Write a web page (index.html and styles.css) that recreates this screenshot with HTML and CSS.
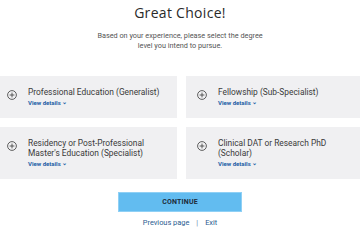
FILE: index.html
```html
<!DOCTYPE html>
<html>
<head>
<meta charset="utf-8">
<link rel="stylesheet" href="styles.css">
</head>
<body>
<main class="page">
  <h1 class="title">Great Choice!</h1>
  <p class="lead">Based on your experience, please select the degree<br>level you intend to pursue.</p>
  <div class="grid">
    <div class="card">
      <span class="plus"><svg viewBox="0 0 10 10" width="10" height="10"><circle cx="5" cy="5" r="4.4" fill="none" stroke="#3a3a3a" stroke-width="0.8"/><path d="M5 2.6V7.4M2.6 5H7.4" stroke="#3a3a3a" stroke-width="0.8"/></svg></span>
      <div class="body">
        <div class="name">Professional Education (Generalist)</div>
        <a class="details">View details <span class="chev">⌄</span></a>
      </div>
    </div>
    <div class="card">
      <span class="plus"><svg viewBox="0 0 10 10" width="10" height="10"><circle cx="5" cy="5" r="4.4" fill="none" stroke="#3a3a3a" stroke-width="0.8"/><path d="M5 2.6V7.4M2.6 5H7.4" stroke="#3a3a3a" stroke-width="0.8"/></svg></span>
      <div class="body">
        <div class="name">Fellowship (Sub-Specialist)</div>
        <a class="details">View details <span class="chev">⌄</span></a>
      </div>
    </div>
    <div class="card">
      <span class="plus"><svg viewBox="0 0 10 10" width="10" height="10"><circle cx="5" cy="5" r="4.4" fill="none" stroke="#3a3a3a" stroke-width="0.8"/><path d="M5 2.6V7.4M2.6 5H7.4" stroke="#3a3a3a" stroke-width="0.8"/></svg></span>
      <div class="body">
        <div class="name">Residency or Post-Professional<br>Master's Education (Specialist)</div>
        <a class="details">View details <span class="chev">⌄</span></a>
      </div>
    </div>
    <div class="card">
      <span class="plus"><svg viewBox="0 0 10 10" width="10" height="10"><circle cx="5" cy="5" r="4.4" fill="none" stroke="#3a3a3a" stroke-width="0.8"/><path d="M5 2.6V7.4M2.6 5H7.4" stroke="#3a3a3a" stroke-width="0.8"/></svg></span>
      <div class="body">
        <div class="name">Clinical DAT or Research PhD<br>(Scholar)</div>
        <a class="details">View details <span class="chev">⌄</span></a>
      </div>
    </div>
  </div>
  <button class="cta">CONTINUE</button>
  <nav class="links">
    <a>Previous page</a><span class="sep">|</span><a>Exit</a>
  </nav>
</main>
</body>
</html>
```

FILE: styles.css
```css
html, body {
  margin: 0;
  padding: 0;
  background: #fff;
  overflow: hidden;
}
body {
  width: 360px;
  height: 241px;
  font-family: Roboto, "Liberation Sans", sans-serif;
}
.page {
  display: flex;
  flex-direction: column;
  align-items: center;
}
.title {
  margin: 3px 0 0;
  font-family: "Open Sans", sans-serif;
  font-weight: 400;
  font-size: 14px;
  line-height: 20px;
  color: #2a2a2a;
  letter-spacing: 0.3px;
}
.lead {
  margin: 8px 0 0;
  font-size: 7.3px;
  line-height: 10px;
  color: #555;
  text-align: center;
}
.grid {
  margin-top: 25px;
  align-self: flex-start;
  margin-left: -4px;
  width: 371px;
  display: grid;
  grid-template-columns: 181px 181px;
  column-gap: 9px;
  row-gap: 9px;
}
.card {
  background: #f0f0f2;
  display: flex;
  align-items: flex-start;
  padding: 11px 10px 11px 11px;
}
.plus {
  flex: none;
  width: 10px;
  height: 10px;
  margin-top: 3px;
  margin-right: 11px;
  display: block;
}
.plus svg { display: block; }
.body {
  display: flex;
  flex-direction: column;
}
.name {
  font-size: 8.4px;
  line-height: 10px;
  color: #3a3a3a;
}
.details {
  margin-top: 2px;
  font-size: 6px;
  line-height: 8px;
  font-weight: 700;
  color: #1d5fa6;
}
.chev {
  font-size: 6px;
  position: relative;
  top: -1px;
}
.cta {
  margin-top: 13px;
  width: 124px;
  height: 20px;
  border: 1px solid #8fd0f5;
  background: #62bcf0;
  font-family: Roboto, sans-serif;
  font-weight: 700;
  font-size: 7px;
  color: #1d2b3a;
  letter-spacing: 0.2px;
  padding: 0;
}
.links {
  margin-top: 6px;
  font-size: 7.4px;
  line-height: 10px;
  color: #2a5b8f;
  display: flex;
  gap: 7px;
}
.sep { color: #6a87a8; }
```
